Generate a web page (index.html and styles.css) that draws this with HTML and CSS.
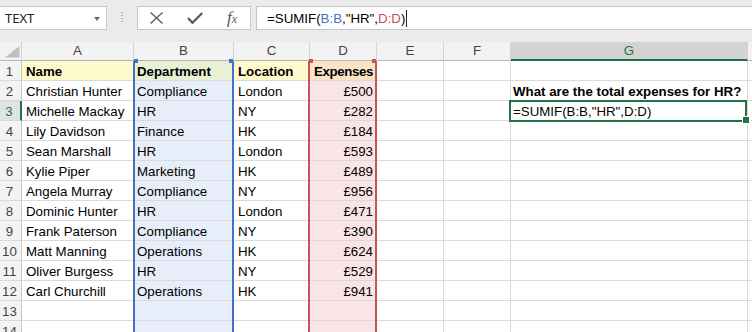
FILE: index.html
```html
<!DOCTYPE html>
<html>
<head>
<meta charset="utf-8">
<link rel="stylesheet" href="styles.css">
</head>
<body>
<div class="fbar">
  <div class="namebox"><span>TEXT</span><span class="dd"></span></div>
  <div class="grip"><i></i><i></i><i></i><i></i></div>
  <div class="btns">
    <svg class="ico-x" width="13" height="12" viewBox="0 0 13 12"><path d="M0.5 0.5 L12.5 11.5 M12.5 0.5 L0.5 11.5" stroke="#5a5a5a" stroke-width="1.3" fill="none"/></svg>
    <svg class="ico-ok" width="16" height="12" viewBox="0 0 16 12"><path d="M1 6 L5.5 10.8 L15.2 1" stroke="#5a5a5a" stroke-width="2.2" fill="none"/></svg>
    <span class="fx"><span class="fx-f">f</span><span class="fx-x">x</span></span>
  </div>
  <div class="formula">=SUMIF(<span class="ref-b">B:B</span>,"HR",<span class="ref-d">D:D</span>)<span class="caret"></span></div>
</div>
<div class="sheet">
  <div class="corner"><svg width="21" height="18" viewBox="0 0 21 18"><polygon points="19.5,4 19.5,15.5 5,15.5" fill="#bfbfbf"/></svg></div>
  <div class="ch">A</div><div class="ch">B</div><div class="ch">C</div><div class="ch">D</div><div class="ch">E</div><div class="ch">F</div><div class="ch sel">G</div><div class="ch"></div>

  <div class="rh">1</div><div class="c y bold">Name</div><div class="c by bold">Department</div><div class="c y bold">Location</div><div class="c dy bold tight">Expenses</div><div class="c"></div><div class="c"></div><div class="c"></div><div class="c"></div>
  <div class="rh">2</div><div class="c">Christian Hunter</div><div class="c cb">Compliance</div><div class="c">London</div><div class="c cd num">£500</div><div class="c"></div><div class="c"></div><div class="c bold over">What are the total expenses for HR?</div><div class="c"></div>
  <div class="rh sel">3</div><div class="c">Michelle Mackay</div><div class="c cb">HR</div><div class="c">NY</div><div class="c cd num">£282</div><div class="c"></div><div class="c"></div><div class="c active">=SUMIF(B:B,"HR",D:D)</div><div class="c"></div>
  <div class="rh">4</div><div class="c">Lily Davidson</div><div class="c cb">Finance</div><div class="c">HK</div><div class="c cd num">£184</div><div class="c"></div><div class="c"></div><div class="c"></div><div class="c"></div>
  <div class="rh">5</div><div class="c">Sean Marshall</div><div class="c cb">HR</div><div class="c">London</div><div class="c cd num">£593</div><div class="c"></div><div class="c"></div><div class="c"></div><div class="c"></div>
  <div class="rh">6</div><div class="c">Kylie Piper</div><div class="c cb">Marketing</div><div class="c">HK</div><div class="c cd num">£489</div><div class="c"></div><div class="c"></div><div class="c"></div><div class="c"></div>
  <div class="rh">7</div><div class="c">Angela Murray</div><div class="c cb">Compliance</div><div class="c">NY</div><div class="c cd num">£956</div><div class="c"></div><div class="c"></div><div class="c"></div><div class="c"></div>
  <div class="rh">8</div><div class="c">Dominic Hunter</div><div class="c cb">HR</div><div class="c">London</div><div class="c cd num">£471</div><div class="c"></div><div class="c"></div><div class="c"></div><div class="c"></div>
  <div class="rh">9</div><div class="c">Frank Paterson</div><div class="c cb">Compliance</div><div class="c">NY</div><div class="c cd num">£390</div><div class="c"></div><div class="c"></div><div class="c"></div><div class="c"></div>
  <div class="rh">10</div><div class="c">Matt Manning</div><div class="c cb">Operations</div><div class="c">HK</div><div class="c cd num">£624</div><div class="c"></div><div class="c"></div><div class="c"></div><div class="c"></div>
  <div class="rh">11</div><div class="c">Oliver Burgess</div><div class="c cb">HR</div><div class="c">NY</div><div class="c cd num">£529</div><div class="c"></div><div class="c"></div><div class="c"></div><div class="c"></div>
  <div class="rh">12</div><div class="c">Carl Churchill</div><div class="c cb">Operations</div><div class="c">HK</div><div class="c cd num">£941</div><div class="c"></div><div class="c"></div><div class="c"></div><div class="c"></div>
  <div class="rh">13</div><div class="c"></div><div class="c cb"></div><div class="c"></div><div class="c cd"></div><div class="c"></div><div class="c"></div><div class="c"></div><div class="c"></div>
  <div class="rh">14</div><div class="c"></div><div class="c cb"></div><div class="c"></div><div class="c cd"></div><div class="c"></div><div class="c"></div><div class="c"></div><div class="c"></div>

  <div class="hl hl-b"></div>
  <div class="hl hl-d"></div>
</div>
</body>
</html>
```

FILE: styles.css
```css
* { box-sizing: border-box; }
html, body { margin: 0; padding: 0; }
body {
  width: 752px;
  height: 332px;
  overflow: hidden;
  background: #fff;
  font-family: "Liberation Sans", Arial, sans-serif;
  font-size: 13.3px;
  color: #000;
}

/* formula bar */
.fbar {
  height: 42px;
  background: #ebebeb;
  display: flex;
  align-items: flex-start;
  padding-top: 6px;
}
.namebox {
  width: 107px;
  height: 24px;
  background: #fff;
  border: 1px solid #c6c6c6;
  border-left: none;
  display: flex;
  align-items: center;
  justify-content: space-between;
  padding: 0 6px 0 5px;
  font-family: "Noto Sans", sans-serif;
  font-size: 13px;
  color: #222;
}
.dd {
  width: 0;
  height: 0;
  border-left: 3.5px solid transparent;
  border-right: 3.5px solid transparent;
  border-top: 4px solid #6a6a6a;
  margin-top: 1px;
}
.grip {
  width: 30px;
  height: 24px;
  display: flex;
  flex-direction: column;
  align-items: center;
  gap: 2px;
  padding-top: 6px;
}
.grip i {
  display: block;
  width: 2px;
  height: 1px;
  background: #a8a8a8;
}
.btns {
  width: 114px;
  height: 24px;
  background: #fff;
  border: 1px solid #c6c6c6;
  display: flex;
  align-items: center;
}
.ico-x { margin-left: 12px; }
.ico-ok { margin-left: 24px; }
.fx {
  margin-left: 24px;
  font-family: "Liberation Serif", serif;
  font-style: italic;
  color: #5a5a5a;
  display: flex;
  align-items: baseline;
}
.fx-f { font-size: 17px; }
.fx-x { font-size: 12px; }
.formula {
  flex: 1;
  margin-left: 5px;
  height: 24px;
  background: #fff;
  border: 1px solid #c6c6c6;
  border-right: none;
  padding-left: 10px;
  display: flex;
  align-items: center;
  white-space: pre;
}
.ref-b { color: #4472c4; }
.ref-d { color: #c9515c; }
.caret {
  display: inline-block;
  width: 1px;
  height: 17px;
  background: #222;
  margin-left: 1px;
}

/* sheet */
.sheet {
  position: relative;
  display: grid;
  grid-template-columns: 22px 112px 100px 76px 67px 67px 67px 237px 1fr;
  grid-template-rows: 19px;
  grid-auto-rows: 20px;
}
.corner {
  background: #f3f3f3;
  border-right: 1px solid #d4d4d4;
  border-bottom: 1px solid #b7b7b7;
}
.corner svg { display: block; }
.ch {
  background: #f3f3f3;
  border-right: 1px solid #d4d4d4;
  border-bottom: 1px solid #b7b7b7;
  text-align: center;
  line-height: 18px;
  color: #444;
}
.ch.sel {
  background: #d3d3d3;
  color: #217346;
  border-bottom: 2px solid #217346;
}
.rh {
  background: #f3f3f3;
  border-right: 1px solid #c6c6c6;
  border-bottom: 1px solid #dadada;
  text-align: center;
  padding: 2px 2px 0 0;
  line-height: 17px;
  color: #444;
}
.rh.sel {
  background: #e2e2e2;
  color: #217346;
  border-right: 2px solid #217346;
}
.c {
  border-right: 1px solid #dadada;
  border-bottom: 1px solid #dadada;
  padding: 2px 3px 0 4px;
  line-height: 17px;
  white-space: nowrap;
  overflow: hidden;
}
.c.over { overflow: visible; padding-left: 2px; }
.bold { font-weight: bold; }
.tight { letter-spacing: -0.4px; }
.num { text-align: right; padding-right: 3px; }
.y { background: #fffacd; }
.by { background: #e8f0d6; padding-left: 3px; }
.dy { background: #fbe4c6; }
.cb { background: #e7eef9; padding-left: 3px; }
.cd { background: #fae5e6; }
.active {
  position: relative;
  overflow: visible;
  padding-left: 2px;
}
.active::after {
  content: "";
  position: absolute;
  left: -2px;
  top: -1px;
  right: 0;
  bottom: -2px;
  border: 2px solid #217346;
}
.active::before {
  content: "";
  position: absolute;
  right: -3px;
  bottom: -4px;
  width: 6px;
  height: 6px;
  background: #217346;
  border: 1px solid #fff;
  z-index: 1;
}

/* reference range highlights (overlays) */
.hl {
  position: absolute;
  top: 19px;
  bottom: 0;
  pointer-events: none;
}
.hl::before, .hl::after {
  content: "";
  position: absolute;
  top: -2px;
  width: 4px;
  height: 4px;
}
.hl::before { left: -1px; }
.hl::after { right: -1px; }
.hl-b {
  left: 133px;
  width: 101px;
  border-left: 2px solid #4472c4;
  border-right: 2px solid #4472c4;
}
.hl-b::before, .hl-b::after { background: #4472c4; }
.hl-d {
  left: 308px;
  width: 69px;
  border-left: 2px solid #c9515c;
  border-right: 2px solid #c9515c;
}
.hl-d::before, .hl-d::after { background: #c9515c; }
```
